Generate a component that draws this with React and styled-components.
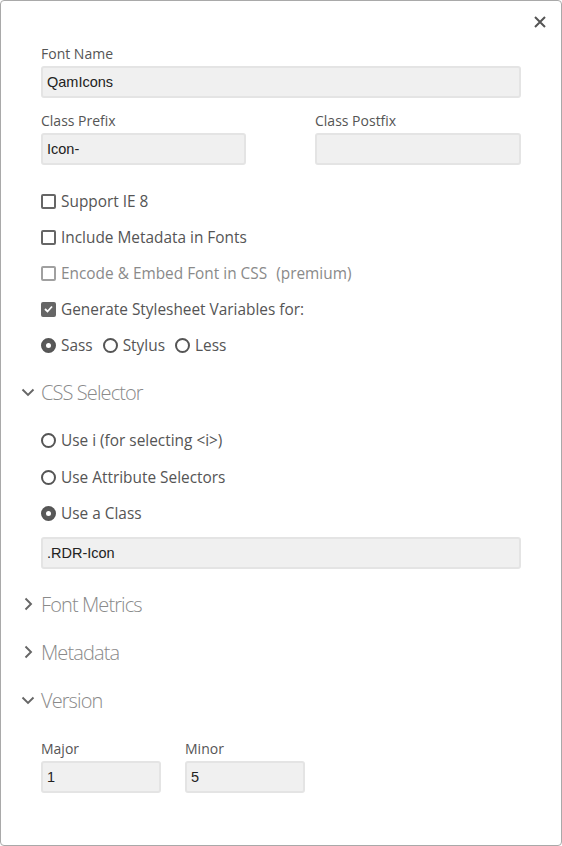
import React from "react";
import styled, { createGlobalStyle } from "styled-components";

const Global = createGlobalStyle`
  html, body { margin: 0; padding: 0; background: #fff; }
  body { font-family: "Open Sans", "Noto Sans", sans-serif; }
  * { box-sizing: border-box; }
`;

const Dialog = styled.div`
  position: relative;
  width: 562px;
  height: 846px;
  border: 1px solid #a9a9a9;
  border-radius: 4px;
  background: #fff;
  padding: 44px 40px 0 40px;
  display: flex;
  flex-direction: column;
`;

const Close = styled.button`
  position: absolute;
  top: 11px;
  right: 11px;
  width: 20px;
  height: 20px;
  padding: 0;
  border: none;
  background: none;
  display: flex;
  align-items: center;
  justify-content: center;
`;

const Label = styled.div`
  font-size: 14px;
  color: #555;
  line-height: 18px;
  margin-bottom: 3px;
`;

const Input = styled.div`
  width: ${(p) => p.$w || "480px"};
  height: 32px;
  background: #f0f0f0;
  border: 2px solid #e4e4e4;
  border-radius: 3px;
  font-family: "Liberation Sans", Arial, sans-serif;
  font-size: 14.5px;
  color: #222;
  padding: 0 4px;
  display: flex;
  align-items: center;
`;

const Field = styled.div`
  display: flex;
  flex-direction: column;
`;

const Row = styled.div`
  display: flex;
  gap: ${(p) => p.$gap || "69px"};
  margin-top: ${(p) => p.$mt || "0"};
`;

const Options = styled.div`
  display: flex;
  flex-direction: column;
  margin-top: ${(p) => p.$mt || "0"};
`;

const Option = styled.div`
  height: ${(p) => p.$h || "36px"};
  display: flex;
  align-items: center;
  gap: 5px;
  font-size: 15.4px;
  letter-spacing: 0px;
  color: ${(p) => (p.$disabled ? "#8a8a8a" : "#555")};
`;

const RadioGroup = styled.div`
  display: flex;
  align-items: center;
  gap: 10px;
  height: 36px;
`;

const RadioItem = styled.span`
  display: flex;
  align-items: center;
  gap: 5px;
  font-size: 15.4px;
  color: #555;
`;

const Box = styled.span`
  width: 15px;
  height: 15px;
  border: 2px solid ${(p) => (p.$disabled ? "#a0a0a0" : "#666")};
  border-radius: 2px;
  background: ${(p) => (p.$checked ? "#666" : "#fff")};
  display: inline-flex;
  align-items: center;
  justify-content: center;
  flex: none;
`;

const Circle = styled.span`
  width: 15px;
  height: 15px;
  border: 2px solid #555;
  border-radius: 50%;
  background: ${(p) => (p.$checked ? "#5a5a5a" : "#fff")};
  display: inline-flex;
  align-items: center;
  justify-content: center;
  flex: none;
  &::after {
    content: "";
    width: 5px;
    height: 5px;
    border-radius: 50%;
    background: #fff;
    display: ${(p) => (p.$checked ? "block" : "none")};
  }
`;

const Section = styled.div`
  display: flex;
  align-items: center;
  height: 48px;
  margin-left: -20px;
  margin-top: ${(p) => p.$mt || "0"};
  gap: 6px;
  font-size: 20px;
  font-weight: 300;
  letter-spacing: -0.9px;
  color: #8a8a8a;
`;

const Premium = styled.span`
  margin-left: 4px;
`;

const Chevron = ({ open }) => (
  <svg width="14" height="14" viewBox="0 0 14 14">
    {open ? (
      <path d="M1.5 4.5 L7 10 L12.5 4.5" fill="none" stroke="#666" strokeWidth="1.9" />
    ) : (
      <path d="M4.5 1.5 L10 7 L4.5 12.5" fill="none" stroke="#666" strokeWidth="1.9" />
    )}
  </svg>
);

const Check = ({ checked, disabled }) => (
  <Box $checked={checked} $disabled={disabled}>
    {checked && (
      <svg width="9" height="8" viewBox="0 0 9 8">
        <path d="M1 4 L3.5 6.5 L8 1.5" fill="none" stroke="#fff" strokeWidth="1.8" />
      </svg>
    )}
  </Box>
);

export default function App() {
  return (
    <>
      <Global />
      <Dialog>
        <Close aria-label="close">
          <svg width="12" height="12" viewBox="0 0 12 12">
            <path d="M1 1 L11 11 M11 1 L1 11" stroke="#555" strokeWidth="2" />
          </svg>
        </Close>

        <Field>
          <Label>Font Name</Label>
          <Input>QamIcons</Input>
        </Field>

        <Row $mt="14px">
          <Field>
            <Label>Class Prefix</Label>
            <Input $w="205px">Icon-</Input>
          </Field>
          <Field>
            <Label>Class Postfix</Label>
            <Input $w="206px"></Input>
          </Field>
        </Row>

        <Options $mt="18px">
          <Option><Check />Support IE 8</Option>
          <Option><Check />Include Metadata in Fonts</Option>
          <Option $disabled><Check disabled />Encode &amp; Embed Font in CSS <Premium>(premium)</Premium></Option>
          <Option><Check checked />Generate Stylesheet Variables for:</Option>
          <RadioGroup>
            <RadioItem><Circle $checked />Sass</RadioItem>
            <RadioItem><Circle />Stylus</RadioItem>
            <RadioItem><Circle />Less</RadioItem>
          </RadioGroup>
        </Options>

        <Section $mt="5px"><Chevron open />CSS Selector</Section>

        <Options $mt="6px">
          <Option $h="37px"><Circle />Use i (for selecting &lt;i&gt;)</Option>
          <Option><Circle />Use Attribute Selectors</Option>
          <Option><Circle $checked />Use a Class</Option>
        </Options>
        <Row $mt="6px">
          <Input>.RDR-Icon</Input>
        </Row>

        <Section $mt="11px"><Chevron />Font Metrics</Section>
        <Section><Chevron />Metadata</Section>
        <Section><Chevron open />Version</Section>

        <Row $mt="16px" $gap="24px">
          <Field>
            <Label>Major</Label>
            <Input $w="120px">1</Input>
          </Field>
          <Field>
            <Label>Minor</Label>
            <Input $w="120px">5</Input>
          </Field>
        </Row>
      </Dialog>
    </>
  );
}
